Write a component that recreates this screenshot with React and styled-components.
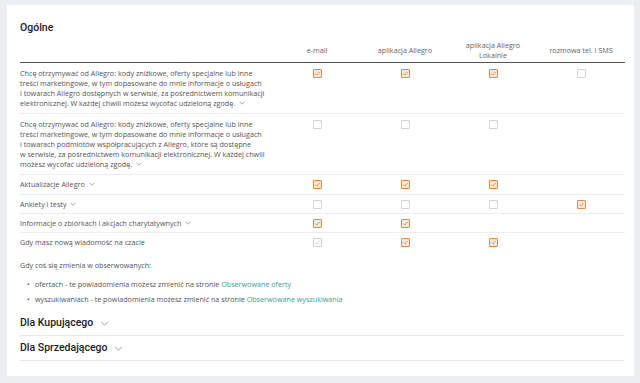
import React from "react";
import styled, { createGlobalStyle } from "styled-components";

const GlobalStyle = createGlobalStyle`
  html, body {
    margin: 0;
    padding: 0;
    background: #eceff1;
  }
  body {
    font-family: "Open Sans", "Liberation Sans", sans-serif;
  }
`;

const Page = styled.div`
  padding: 5px 6px 7px 7px;
`;

const Card = styled.div`
  background: #fff;
  padding: 16px 10px 18px 13px;
  height: 371px;
  box-sizing: border-box;
`;

const SectionTitle = styled.h2`
  font-family: Roboto, "Liberation Sans", sans-serif;
  font-weight: 500;
  font-size: 10.5px;
  line-height: 14px;
  color: #222;
  margin: 0 0 3px;
  display: flex;
  align-items: center;
`;

const Table = styled.div`
  display: grid;
  grid-template-columns: 253px repeat(4, 88px);
  font-size: 7.2px;
  color: #555;
`;

const HeadCell = styled.div`
  height: 24px;
  display: flex;
  align-items: center;
  justify-content: center;
  text-align: center;
  line-height: 10px;
  white-space: pre-line;
  border-bottom: 1px solid #555;
  color: #666;
`;

const Cell = styled.div`
  padding: ${(p) => (p.$tall ? "5px 0 5px" : "4px 0 4px")};
  height: ${(p) => p.$h}px;
  box-sizing: border-box;
  line-height: 10px;
  border-bottom: ${(p) => (p.$last ? "none" : "1px solid #ececec")};
  display: flex;
  justify-content: center;
  align-items: flex-start;
`;

const TextCell = styled(Cell)`
  display: block;
  padding-right: 2px;
`;

const Box = styled.span`
  width: 9px;
  height: 9px;
  box-sizing: border-box;
  border: 1px solid ${(p) => (p.$on ? (p.$disabled ? "#cfcfcf" : "#dd8a4a") : "#d3d3d3")};
  background: ${(p) => (p.$on && !p.$disabled ? "#fbe8d8" : "#fff")};
  border-radius: 1px;
  display: inline-flex;
  align-items: center;
  justify-content: center;
  margin-top: 1px;
`;

const ChevronSvg = styled.svg`
  display: inline-block;
  vertical-align: ${(p) => (p.$big ? "middle" : "1px")};
  margin-left: ${(p) => (p.$big ? "7px" : "4px")};
`;

const Chevron = ({ big }) => (
  <ChevronSvg $big={big} width={big ? 9 : 6} height={big ? 5 : 4} viewBox="0 0 10 6">
    <path d="M1 1l4 4 4-4" fill="none" stroke="#8a8a8a" strokeWidth={big ? 1 : 1.2} />
  </ChevronSvg>
);

const Check = ({ on, disabled }) => (
  <Box $on={on} $disabled={disabled}>
    {on && (
      <svg width="7" height="7" viewBox="0 0 10 10">
        <path d="M2 5.2l2 2 4-4.4" fill="none" stroke={disabled ? "#bbb" : "#9a7a60"} strokeWidth="1" />
      </svg>
    )}
  </Box>
);

const Note = styled.p`
  font-size: 7.2px;
  line-height: 10px;
  color: #555;
  margin: 8px 0 9px;
`;

const List = styled.ul`
  margin: 0 0 7px;
  padding: 0 0 0 15px;
  list-style: none;
  font-size: 7.2px;
  color: #555;
  li {
    line-height: 10px;
    margin-bottom: 5px;
  }
  li::before {
    content: "•";
    display: inline-block;
    width: 8px;
    margin-left: -8px;
    color: #555;
  }
`;

const Link = styled.a`
  color: #3f9b8f;
  text-decoration: none;
`;

const Collapsed = styled(SectionTitle)`
  margin: 0;
  padding: 5px 0 5px;
  border-bottom: 1px solid #e6e6e6;
`;

// twarde spacje po jednoliterowych słowach, jak w oryginale
const marketing1 =
  "Chcę otrzymywać od Allegro: kody zniżkowe, oferty specjalne lub inne treści marketingowe, w\u00a0tym dopasowane do mnie informacje o\u00a0usługach i\u00a0towarach Allegro dostępnych w\u00a0serwisie, za pośrednictwem komunikacji elektronicznej. W\u00a0każdej chwili możesz wycofać udzieloną zgodę.";
const marketing2 =
  "Chcę otrzymywać od Allegro: kody zniżkowe, oferty specjalne lub inne treści marketingowe, w\u00a0tym dopasowane do mnie informacje o\u00a0usługach i\u00a0towarach podmiotów współpracujących z\u00a0Allegro, które są dostępne w\u00a0serwisie, za pośrednictwem komunikacji elektronicznej. W\u00a0każdej chwili możesz wycofać udzieloną zgodę.";

// null = brak kanału, "on" / "off" / "dis"
const rows = [
  { text: marketing1, chev: true, tall: true, h: 51, boxes: ["on", "on", "on", "off"] },
  { text: marketing2, chev: true, tall: true, h: 61, boxes: ["off", "off", "off", null] },
  { text: "Aktualizacje Allegro", chev: true, h: 20, boxes: ["on", "on", "on", null] },
  { text: "Ankiety i\u00a0testy", chev: true, h: 19, boxes: ["off", "off", "off", "on"] },
  { text: "Informacje o\u00a0zbiórkach i\u00a0akcjach charytatywnych", chev: true, h: 19, boxes: ["on", "on", null, null] },
  { text: "Gdy masz nową wiadomość na czacie", h: 19, boxes: ["dis", "on", "on", null] },
];

const headers = ["e-mail", "aplikacja Allegro", "aplikacja Allegro\nLokalnie", "rozmowa tel. i SMS"];

const App = () => {
  return (
    <Page>
      <GlobalStyle />
      <Card>
        <SectionTitle>Ogólne</SectionTitle>
        <Table>
          <HeadCell />
          {headers.map((h) => (
            <HeadCell key={h}>{h}</HeadCell>
          ))}
          {rows.map((r, i) => {
            const last = i === rows.length - 1;
            return (
              <React.Fragment key={i}>
                <TextCell $tall={r.tall} $last={last} $h={r.h}>
                  {r.text}
                  {r.chev && <Chevron />}
                </TextCell>
                {r.boxes.map((b, j) => (
                  <Cell key={j} $tall={r.tall} $last={last} $h={r.h}>
                    {b && <Check on={b === "on" || b === "dis"} disabled={b === "dis"} />}
                  </Cell>
                ))}
              </React.Fragment>
            );
          })}
        </Table>
        <Note>Gdy coś się zmienia w obserwowanych:</Note>
        <List>
          <li>
            ofertach - te powiadomienia możesz zmienić na stronie <Link href="#">Obserwowane oferty</Link>
          </li>
          <li>
            wyszukiwaniach - te powiadomienia możesz zmienić na stronie{" "}
            <Link href="#">Obserwowane wyszukiwania</Link>
          </li>
        </List>
        <Collapsed>
          Dla Kupującego
          <Chevron big />
        </Collapsed>
        <Collapsed>
          Dla Sprzedającego
          <Chevron big />
        </Collapsed>
      </Card>
    </Page>
  );
};

export default App;
